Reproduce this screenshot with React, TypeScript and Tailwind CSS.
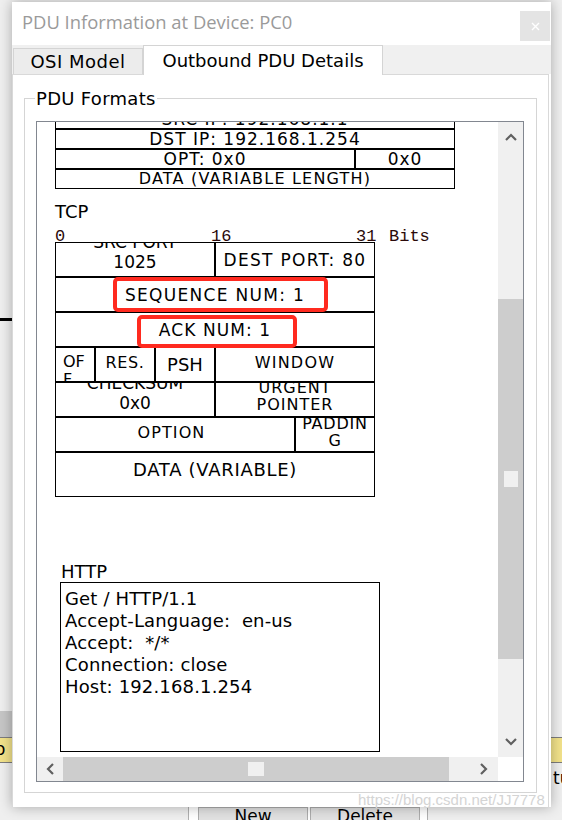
import React from "react";

const ChevUp = () => (
  <svg width="12" height="8" viewBox="0 0 12 8">
    <polyline points="1,7 6,2 11,7" fill="none" stroke="#606060" strokeWidth="2.2" />
  </svg>
);
const ChevDown = () => (
  <svg width="12" height="8" viewBox="0 0 12 8">
    <polyline points="1,1 6,6 11,1" fill="none" stroke="#606060" strokeWidth="2.2" />
  </svg>
);
const ChevLeft = () => (
  <svg width="8" height="12" viewBox="0 0 8 12">
    <polyline points="7,1 2,6 7,11" fill="none" stroke="#606060" strokeWidth="2.2" />
  </svg>
);
const ChevRight = () => (
  <svg width="8" height="12" viewBox="0 0 8 12">
    <polyline points="1,1 6,6 1,11" fill="none" stroke="#606060" strokeWidth="2.2" />
  </svg>
);

export default function App() {
  return (
    <div className="relative w-[562px] h-[820px] overflow-hidden bg-[#efefef] font-['DejaVu_Sans',Verdana,sans-serif] text-black">
      {/* desktop fragments behind the dialog */}
      <div className="absolute left-0 top-[318px] w-[14px] h-[3px] bg-black" />
      <div className="absolute left-0 top-[711px] w-[14px] h-[26px] bg-[#c6c6c6]" />
      <div className="absolute left-0 top-[737px] w-[14px] h-[26px] bg-[#f2e28a] border-y border-[#7d7d7d] overflow-hidden">
        <span className="block -ml-[5px] text-[17px] leading-[22px]">o</span>
      </div>
      <div className="absolute left-[549px] top-[737px] w-[13px] h-[26px] bg-[#f2e28a] border-y border-[#7d7d7d]" />
      <div className="absolute left-[553px] top-[767px] text-[17px] leading-[22px]">tu</div>
      <div className="absolute left-[188px] top-[800px] w-[240px] h-[20px] bg-white border-x border-[#b0b0b0] flex gap-[2px] pl-[9px] pt-[7px]">
        <div className="w-[110px] h-[30px] bg-[#e1e1e1] border border-[#adadad] text-center text-[17px] leading-[16px]">New</div>
        <div className="w-[110px] h-[30px] bg-[#e1e1e1] border border-[#adadad] text-center text-[17px] leading-[16px]">Delete</div>
      </div>

      {/* dialog window */}
      <div className="absolute left-[12px] top-[2px] w-[539px] h-[805px] bg-white shadow-[0_0_12px_rgba(0,0,0,0.3)] flex flex-col">
        {/* title bar */}
        <div className="h-[43px] shrink-0 flex">
          <div className="pl-[10px] pt-[8px] text-[18.4px] leading-[24px] text-[#9a9a9a] font-['Open_Sans',sans-serif]">
            PDU Information at Device: PC0
          </div>
          <div className="ml-auto mt-[9px] mr-[1px] w-[30px] h-[30px] bg-[#e4e4e4] flex items-center justify-center">
            <svg width="9" height="9" viewBox="0 0 9 9">
              <path d="M1 1 L8 8 M8 1 L1 8" stroke="white" strokeWidth="1.4" />
            </svg>
          </div>
        </div>

        {/* tabs */}
        <div className="h-[29px] shrink-0 bg-[#f0f0f0] flex items-end relative z-10">
          <div className="ml-[1px] w-[130px] h-[26px] bg-[#ececec] border border-b-0 border-[#d4d4d4] flex items-center justify-center text-[18px] leading-[22px] tracking-[0.5px]">
            OSI Model
          </div>
          <div className="w-[240px] h-[30px] -mb-px bg-white border border-b-0 border-[#d4d4d4] flex items-center justify-center text-[18px] leading-[22px]">
            Outbound PDU Details
          </div>
        </div>

        {/* tab panel */}
        <div className="flex-1 mr-[2px] border-t border-x border-[#d9d9d9]">
          <div className="relative ml-[11px] mt-[23px] w-[513px] h-[695px] border border-[#d5d5d5]">
            <div className="absolute left-[10px] top-[-12px] bg-white px-[1px] text-[18px] leading-[24px] tracking-[0.3px]">PDU Formats</div>

            {/* scroll pane */}
            <div className="ml-[11px] mt-[22px] w-[488px] h-[661px] border border-[#828790] grid grid-cols-[461px_25px] grid-rows-[635px_24px]">
              {/* viewport */}
              <div className="overflow-hidden bg-white">
                {/* IP table (scrolled) */}
                <div className="ml-[18px] -mt-[13px] w-[400px] text-[17px] leading-[18px] tracking-[1px]">
                  <div className="h-[20px] border border-black text-center overflow-hidden">SRC IP: 192.168.1.1</div>
                  <div className="h-[20px] border border-black text-center">DST IP: 192.168.1.254</div>
                  <div className="flex">
                    <div className="w-[300px] h-[20px] border border-black text-center">OPT: 0x0</div>
                    <div className="w-[100px] h-[20px] border border-black text-center">0x0</div>
                  </div>
                  <div className="h-[20px] border border-black text-center text-[16px] tracking-[1.2px]">DATA (VARIABLE LENGTH)</div>
                </div>

                {/* TCP */}
                <div className="ml-[18px] mt-[12px] text-[18px] leading-[22px]">TCP</div>
                <div className="ml-[18px] h-[19px] flex font-['Liberation_Mono',monospace] text-[17px] leading-[17px] pt-[5px] text-[#2b0a0a]">
                  <span className="w-[156px]">0</span>
                  <span className="w-[145px]">16</span>
                  <span className="w-[33px]">31</span>
                  <span>Bits</span>
                </div>

                <div className="relative ml-[18px] w-[320px]">
                  <div className="flex">
                    <div className="w-[160px] h-[35px] border border-black overflow-hidden flex flex-col items-center justify-end pb-[4px] text-[17px] leading-[20px]">
                      <div>SRC PORT</div>
                      <div>1025</div>
                    </div>
                    <div className="w-[160px] h-[35px] border border-black flex items-center justify-center text-[17px] leading-[20px] tracking-[1.3px]">
                      DEST PORT: 80
                    </div>
                  </div>
                  <div className="h-[35px] border border-black flex items-center justify-center text-[17px] leading-[20px] tracking-[1.3px]">
                    SEQUENCE NUM: 1
                  </div>
                  <div className="h-[35px] border border-black flex items-center justify-center text-[17px] leading-[20px] tracking-[1.1px]">
                    ACK NUM: 1
                  </div>
                  <div className="flex">
                    <div className="w-[40px] h-[35px] border border-black overflow-hidden pl-[7px] pt-[5px] text-[16px] leading-[18px]">
                      <div>OF</div>
                      <div>F</div>
                    </div>
                    <div className="w-[60px] h-[35px] border border-black flex items-center justify-center pb-[4px] text-[16px] leading-[18px] tracking-[0.6px]">
                      RES.
                    </div>
                    <div className="w-[60px] h-[35px] border border-black flex items-center justify-center text-[18px] leading-[20px]">
                      PSH
                    </div>
                    <div className="w-[160px] h-[35px] border border-black flex items-center justify-center pb-[4px] text-[16px] leading-[18px] tracking-[1.2px]">
                      WINDOW
                    </div>
                  </div>
                  <div className="flex">
                    <div className="w-[160px] h-[35px] border border-black overflow-hidden flex flex-col items-center justify-end pb-[3px] text-[17px] leading-[20px]">
                      <div>CHECKSUM</div>
                      <div>0x0</div>
                    </div>
                    <div className="w-[160px] h-[35px] border border-black overflow-hidden flex flex-col items-center justify-end pb-[3px] text-[16px] leading-[17px] tracking-[1px]">
                      <div>URGENT</div>
                      <div>POINTER</div>
                    </div>
                  </div>
                  <div className="flex">
                    <div className="w-[240px] h-[35px] border border-black flex items-center justify-center pb-[4px] pr-[7px] text-[16px] leading-[18px] tracking-[1.1px]">
                      OPTION
                    </div>
                    <div className="w-[80px] h-[35px] border border-black overflow-hidden flex flex-col items-center justify-end pb-[2px] text-[16px] leading-[17px] tracking-[0.8px]">
                      <div>PADDIN</div>
                      <div>G</div>
                    </div>
                  </div>
                  <div className="h-[45px] border border-black text-center pt-[7px] text-[18px] leading-[20px] tracking-[0.7px]">
                    DATA (VARIABLE)
                  </div>

                  {/* red annotation boxes */}
                  <div className="absolute left-[58px] top-[35px] w-[215px] h-[35px] border-4 border-[#ff2a1f] rounded-[5px]" />
                  <div className="absolute left-[82px] top-[73px] w-[160px] h-[33px] border-4 border-[#ff2a1f] rounded-[5px]" />
                </div>

                {/* HTTP */}
                <div className="ml-[24px] mt-[65px] text-[18px] leading-[20px]">HTTP</div>
                <div className="ml-[23px] w-[320px] h-[170px] border border-black pl-[4px] pt-[5px] text-[18px] leading-[22px] tracking-[0.15px] whitespace-pre">
                  <div>Get / HTTP/1.1</div>
                  <div>Accept-Language:  en-us</div>
                  <div>Accept:  */*</div>
                  <div>Connection: close</div>
                  <div>Host: 192.168.1.254</div>
                </div>
              </div>

              {/* vertical scrollbar */}
              <div className="bg-[#f0f0f0] flex flex-col">
                <div className="h-[30px] flex items-center justify-center"><ChevUp /></div>
                <div className="h-[147px]" />
                <div className="h-[360px] bg-[#cdcdcd] flex items-center justify-center">
                  <div className="w-[14px] h-[16px] bg-[#f0f0f0]" />
                </div>
                <div className="flex-1" />
                <div className="h-[30px] flex items-center justify-center"><ChevDown /></div>
              </div>

              {/* horizontal scrollbar */}
              <div className="bg-[#f0f0f0] flex">
                <div className="w-[26px] flex items-center justify-center"><ChevLeft /></div>
                <div className="w-[386px] bg-[#cdcdcd] flex items-center justify-center">
                  <div className="w-[16px] h-[14px] bg-[#f0f0f0]" />
                </div>
                <div className="flex-1 flex items-center justify-end">
                  <div className="w-[28px] flex justify-center"><ChevRight /></div>
                </div>
              </div>
              <div className="bg-white" />
            </div>
          </div>
        </div>
      </div>

      {/* watermark */}
      <div className="absolute left-[358px] top-[791px] text-[15px] leading-[18px] text-[#d4d4d4] font-['Liberation_Sans',Arial,sans-serif]">
        https://blog.csdn.net/JJ7778
      </div>
    </div>
  );
}
